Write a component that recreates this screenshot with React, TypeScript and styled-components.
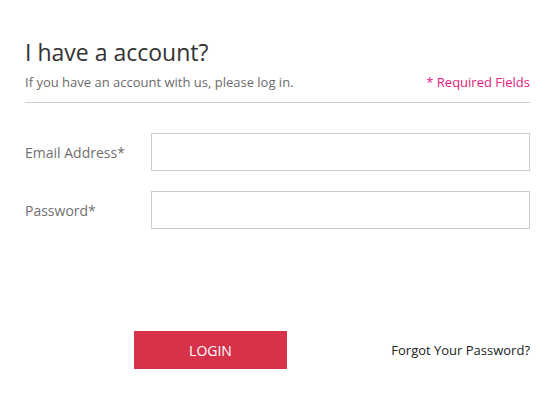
import React from "react";
import styled, { createGlobalStyle } from "styled-components";

const Global = createGlobalStyle`
  html, body { margin: 0; padding: 0; background: #fff; }
  body { font-family: "Open Sans", "Liberation Sans", sans-serif; }
  * { box-sizing: border-box; }
`;

const Page = styled.div`
  padding: 36px 25px 0 25px;
  width: 555px;
`;

const Title = styled.h1`
  margin: 0;
  font-size: 23px;
  font-weight: 400;
  color: #333;
  line-height: 32px;
`;

const HeaderRow = styled.div`
  display: flex;
  justify-content: space-between;
  align-items: baseline;
  margin-top: 5px;
  padding-bottom: 11px;
  border-bottom: 1px solid #cccccc;
`;

const Sub = styled.p`
  margin: 0;
  font-size: 13px;
  color: #6b6b6b;
  line-height: 18px;
`;

const Required = styled.span`
  font-size: 13px;
  color: #e3197f;
  line-height: 18px;
`;

const Fields = styled.div`
  display: flex;
  flex-direction: column;
  gap: 20px;
  margin-top: 30px;
`;

const Row = styled.div`
  display: flex;
  align-items: center;
`;

const Label = styled.label`
  width: 126px;
  font-size: 14px;
  color: #707070;
`;

const Input = styled.input`
  flex: 1;
  height: 38px;
  border: 1px solid #cccccc;
  background: #fff;
  outline: none;
  padding: 0 10px;
  font-family: inherit;
  font-size: 14px;
`;

const Actions = styled.div`
  display: flex;
  align-items: center;
  justify-content: space-between;
  margin-top: 102px;
  padding-left: 109px;
`;

const Button = styled.button`
  width: 153px;
  height: 38px;
  background: #d6334b;
  color: #fff;
  border: none;
  font-family: inherit;
  font-size: 14px;
  text-transform: uppercase;
  cursor: pointer;
`;

const Forgot = styled.a`
  font-size: 13px;
  color: #222;
  text-decoration: none;
`;

export default function App() {
  return (
    <>
      <Global />
      <Page>
        <Title>I have a account?</Title>
        <HeaderRow>
          <Sub>If you have an account with us, please log in.</Sub>
          <Required>* Required Fields</Required>
        </HeaderRow>
        <Fields>
          <Row>
            <Label>Email Address*</Label>
            <Input type="email" />
          </Row>
          <Row>
            <Label>Password*</Label>
            <Input type="password" />
          </Row>
        </Fields>
        <Actions>
          <Button>Login</Button>
          <Forgot href="#">Forgot Your Password?</Forgot>
        </Actions>
      </Page>
    </>
  );
}
